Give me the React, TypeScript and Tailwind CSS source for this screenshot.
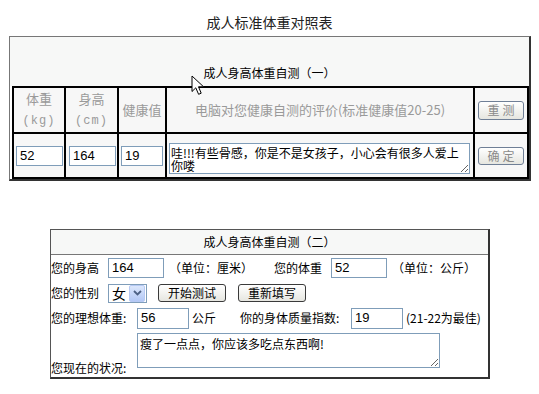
import React from 'react';

const cjk = "font-['Noto_Sans_CJK_SC',sans-serif]";

function XpButton({ label, muted = false, w }: { label: string; muted?: boolean; w: string }) {
  return (
    <button
      className={`${w} flex items-center justify-center rounded-[3px] border text-[12px] leading-none bg-gradient-to-b from-white to-[#e6e6e0] ${
        muted ? 'border-[#6f7f96] text-[#8a8a8a] tracking-[3px] pl-[3px]' : 'border-[#3a3a3a] text-black'
      }`}
    >
      {label}
    </button>
  );
}

function Field({ value, w, h = 'h-[20px]' }: { value: string; w: string; h?: string }) {
  return (
    <div className={`${w} ${h} flex items-center border border-[#7f9db9] bg-white pl-[3px] font-['Liberation_Sans',sans-serif] text-[13px] text-black`}>
      {value}
    </div>
  );
}

function Cursor() {
  return (
    <svg className="absolute left-[191px] top-[75px]" width="14" height="21" viewBox="0 0 14 21">
      <path d="M1 1 L1 16.5 L4.8 12.8 L7.6 19.3 L10.2 18.2 L7.5 11.8 L12.6 11.8 Z" fill="white" stroke="black" strokeWidth="1" strokeLinejoin="miter" />
    </svg>
  );
}

export default function App() {
  const headCell = 'bg-[#f7f7f7] flex flex-col items-center justify-center text-[#9a9a9a] text-[13px]';
  const unit = "font-['Liberation_Mono',monospace] text-[12px] tracking-[1px]";
  return (
    <div className={`relative w-[539px] h-[394px] bg-white overflow-hidden ${cjk} text-[12px] text-black`}>
      <div className="h-[36px] pt-[13px] text-center text-[14px] leading-[18px] text-[#222]">成人标准体重对照表</div>

      {/* 表一 */}
      <div className="ml-[9px] w-[522px] border-l border-t border-[#777] border-r-2 border-b-2 border-r-[#333] border-b-[#333]">
        <div className="h-[49px] bg-[#f7f8f7] flex items-end justify-center pb-[5px] leading-[16px]">成人身高体重自测（一）</div>
        <div className="ml-[2px] grid grid-cols-[50px_51px_46px_306px_52px] grid-rows-[44px_43px] gap-[2px] p-[2px] bg-black">
          <div className={`${headCell} leading-[23px]`}>
            <span>体重</span>
            <span className={unit}>(kg)</span>
          </div>
          <div className={`${headCell} leading-[23px]`}>
            <span>身高</span>
            <span className={unit}>(cm)</span>
          </div>
          <div className={headCell}>健康值</div>
          <div className={headCell}>电脑对您健康自测的评价(标准健康值20-25)</div>
          <div className="bg-[#f7f7f7] flex items-center justify-center">
            <XpButton label="重测" muted w="w-[46px] h-[19px]" />
          </div>

          <div className="bg-[#f7f7f7] flex items-center pl-[2px]">
            <Field value="52" w="w-[47px]" />
          </div>
          <div className="bg-[#f7f7f7] flex items-center pl-[3px]">
            <Field value="164" w="w-[47px]" />
          </div>
          <div className="bg-[#f7f7f7] flex items-center pl-[2px]">
            <Field value="19" w="w-[42px]" />
          </div>
          <div className="bg-[#f7f7f7] pl-[2px] pt-[9px]">
            <textarea
              readOnly
              className="block w-[301px] h-[31px] resize-y overflow-hidden border border-[#7f9db9] bg-white px-[1px] pt-[2px] text-[12px] leading-[13px] text-black outline-none"
              value="哇!!!有些骨感，你是不是女孩子，小心会有很多人爱上你喽"
            />
          </div>
          <div className="bg-[#f7f7f7] flex items-center justify-center">
            <XpButton label="确定" muted w="w-[46px] h-[18px]" />
          </div>
        </div>
      </div>

      {/* 表二 */}
      <div className="ml-[50px] mt-[48px] w-[440px] border-l border-t border-[#555] border-r-2 border-b-2 border-r-[#333] border-b-[#333]">
        <div className="h-[25px] bg-[#f7f8f7] border-b border-[#777] flex items-center justify-center leading-[16px]">成人身高体重自测（二）</div>

        <div className="h-[26px] flex items-center">
          <span className="w-[57px]">您的身高</span>
          <Field value="164" w="w-[56px]" />
          <span className="ml-[5px] w-[84px]">（单位：厘米）</span>
          <span className="ml-[21px] w-[57px]">您的体重</span>
          <Field value="52" w="w-[56px]" />
          <span className="ml-[5px]">（单位：公斤）</span>
        </div>

        <div className="h-[24px] flex items-center">
          <span className="w-[57px]">您的性别</span>
          <div className="w-[39px] h-[19px] flex items-center border border-[#7f9db9] bg-white">
            <span className="flex-1 pl-[3px] text-[14px] leading-none">女</span>
            <span className="w-[16px] h-[17px] mr-[1px] flex items-center justify-center rounded-[2px] bg-gradient-to-b from-[#dce7fc] to-[#b3c8f5] border border-[#b6c9f4]">
              <svg width="9" height="6" viewBox="0 0 9 6">
                <path d="M1 1 L4.5 4.5 L8 1" fill="none" stroke="#4d6185" strokeWidth="1.8" />
              </svg>
            </span>
          </div>
          <div className="ml-[11px]">
            <XpButton label="开始测试" w="w-[68px] h-[18px]" />
          </div>
          <div className="ml-[12px]">
            <XpButton label="重新填写" w="w-[68px] h-[18px]" />
          </div>
        </div>

        <div className="h-[26px] flex items-center">
          <span className="w-[86px]">您的理想体重:</span>
          <Field value="56" w="w-[52px]" h="h-[21px]" />
          <span className="ml-[3px] w-[48px]">公斤</span>
          <span className="w-[111px]">你的身体质量指数:</span>
          <Field value="19" w="w-[52px]" h="h-[21px]" />
          <span className="ml-[3px]">(21-22为最佳)</span>
        </div>

        <div className="h-[46px] flex items-start">
          <span className="w-[86px] self-end mb-[1px] leading-[16px]">您现在的状况:</span>
          <textarea
            readOnly
            className="mt-[2px] block w-[303px] h-[35px] resize-y overflow-hidden border border-[#7f9db9] bg-white px-[2px] pt-[3px] text-[12px] leading-[14px] text-black outline-none"
            value="瘦了一点点，你应该多吃点东西啊!"
          />
        </div>
      </div>

      <Cursor />
    </div>
  );
}
